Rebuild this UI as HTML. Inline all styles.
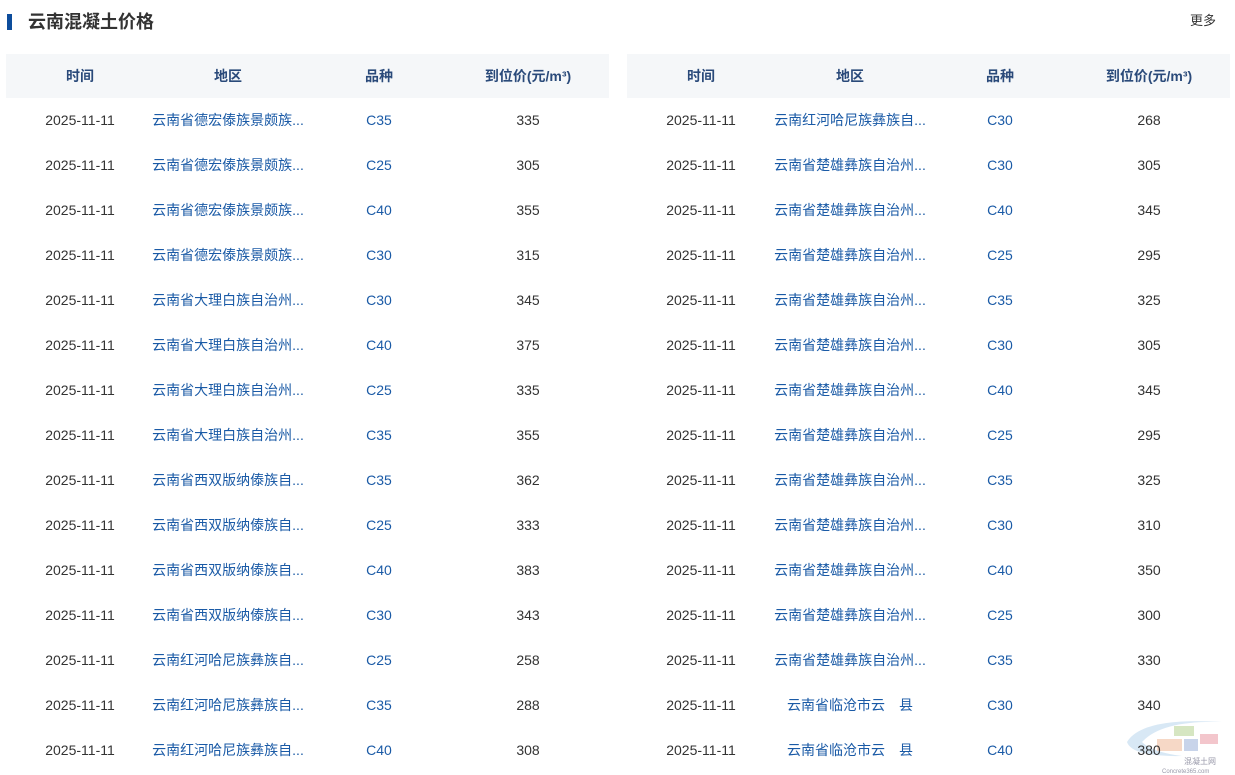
<!DOCTYPE html>
<html><head><meta charset="utf-8"><style>
*{margin:0;padding:0;box-sizing:border-box}
body{width:1235px;height:775px;background:#fff;font-family:"Liberation Sans","Noto Sans CJK SC",sans-serif;position:relative;overflow:hidden;color:#333}
.bar{position:absolute;left:7px;top:14px;width:5px;height:16px;background:#0d4d9c}
.title{position:absolute;left:28px;top:10px;font-size:18px;font-weight:bold;color:#333;line-height:24px}
.more{position:absolute;left:1190px;top:12px;font-size:13px;color:#333;line-height:18px}
.hd{position:absolute;top:54px;height:44px;width:603px;background:#f5f7f9}
.c{position:absolute;transform:translateX(-50%);white-space:nowrap;font-size:14px;line-height:20px}
.h{font-weight:bold;color:#2a4a7a;font-size:14px}
.b{color:#1a5aa6}
</style></head><body>
<div class="bar"></div><div class="title">云南混凝土价格</div><div class="more">更多</div>
<div class="hd" style="left:6px"></div><div class="hd" style="left:627px"></div>
<div id="t"></div>
<div class="c h" style="left:80px;top:66px">时间</div><div class="c h" style="left:228px;top:66px">地区</div><div class="c h" style="left:379px;top:66px">品种</div><div class="c h" style="left:528px;top:66px">到位价(元/m³)</div>
<div class="c h" style="left:701px;top:66px">时间</div><div class="c h" style="left:850px;top:66px">地区</div><div class="c h" style="left:1000px;top:66px">品种</div><div class="c h" style="left:1149px;top:66px">到位价(元/m³)</div>
<svg style="position:absolute;left:1122px;top:712px" width="113" height="63"><path d="M5 30 Q20 5 100 10 Q40 8 20 30 Q30 40 60 44 Q10 45 5 30Z" fill="#d8e8f5"/><rect x="52" y="14" width="20" height="10" fill="#d6e6c2"/><rect x="35" y="27" width="25" height="12" fill="#f6d8c6"/><rect x="62" y="27" width="14" height="12" fill="#c8d4ea"/><rect x="78" y="22" width="18" height="10" fill="#f3c6cc"/><text x="62" y="52" font-size="8" fill="#99a">混凝土网</text><text x="40" y="61" font-size="6" fill="#99a">Concrete365.com</text></svg>
<div class="c" style="left:80px;top:110px">2025-11-11</div><div class="c b" style="left:228px;top:110px">云南省德宏傣族景颇族...</div><div class="c b" style="left:379px;top:110px">C35</div><div class="c" style="left:528px;top:110px">335</div>
<div class="c" style="left:80px;top:155px">2025-11-11</div><div class="c b" style="left:228px;top:155px">云南省德宏傣族景颇族...</div><div class="c b" style="left:379px;top:155px">C25</div><div class="c" style="left:528px;top:155px">305</div>
<div class="c" style="left:80px;top:200px">2025-11-11</div><div class="c b" style="left:228px;top:200px">云南省德宏傣族景颇族...</div><div class="c b" style="left:379px;top:200px">C40</div><div class="c" style="left:528px;top:200px">355</div>
<div class="c" style="left:80px;top:245px">2025-11-11</div><div class="c b" style="left:228px;top:245px">云南省德宏傣族景颇族...</div><div class="c b" style="left:379px;top:245px">C30</div><div class="c" style="left:528px;top:245px">315</div>
<div class="c" style="left:80px;top:290px">2025-11-11</div><div class="c b" style="left:228px;top:290px">云南省大理白族自治州...</div><div class="c b" style="left:379px;top:290px">C30</div><div class="c" style="left:528px;top:290px">345</div>
<div class="c" style="left:80px;top:335px">2025-11-11</div><div class="c b" style="left:228px;top:335px">云南省大理白族自治州...</div><div class="c b" style="left:379px;top:335px">C40</div><div class="c" style="left:528px;top:335px">375</div>
<div class="c" style="left:80px;top:380px">2025-11-11</div><div class="c b" style="left:228px;top:380px">云南省大理白族自治州...</div><div class="c b" style="left:379px;top:380px">C25</div><div class="c" style="left:528px;top:380px">335</div>
<div class="c" style="left:80px;top:425px">2025-11-11</div><div class="c b" style="left:228px;top:425px">云南省大理白族自治州...</div><div class="c b" style="left:379px;top:425px">C35</div><div class="c" style="left:528px;top:425px">355</div>
<div class="c" style="left:80px;top:470px">2025-11-11</div><div class="c b" style="left:228px;top:470px">云南省西双版纳傣族自...</div><div class="c b" style="left:379px;top:470px">C35</div><div class="c" style="left:528px;top:470px">362</div>
<div class="c" style="left:80px;top:515px">2025-11-11</div><div class="c b" style="left:228px;top:515px">云南省西双版纳傣族自...</div><div class="c b" style="left:379px;top:515px">C25</div><div class="c" style="left:528px;top:515px">333</div>
<div class="c" style="left:80px;top:560px">2025-11-11</div><div class="c b" style="left:228px;top:560px">云南省西双版纳傣族自...</div><div class="c b" style="left:379px;top:560px">C40</div><div class="c" style="left:528px;top:560px">383</div>
<div class="c" style="left:80px;top:605px">2025-11-11</div><div class="c b" style="left:228px;top:605px">云南省西双版纳傣族自...</div><div class="c b" style="left:379px;top:605px">C30</div><div class="c" style="left:528px;top:605px">343</div>
<div class="c" style="left:80px;top:650px">2025-11-11</div><div class="c b" style="left:228px;top:650px">云南红河哈尼族彝族自...</div><div class="c b" style="left:379px;top:650px">C25</div><div class="c" style="left:528px;top:650px">258</div>
<div class="c" style="left:80px;top:695px">2025-11-11</div><div class="c b" style="left:228px;top:695px">云南红河哈尼族彝族自...</div><div class="c b" style="left:379px;top:695px">C35</div><div class="c" style="left:528px;top:695px">288</div>
<div class="c" style="left:80px;top:740px">2025-11-11</div><div class="c b" style="left:228px;top:740px">云南红河哈尼族彝族自...</div><div class="c b" style="left:379px;top:740px">C40</div><div class="c" style="left:528px;top:740px">308</div>
<div class="c" style="left:701px;top:110px">2025-11-11</div><div class="c b" style="left:850px;top:110px">云南红河哈尼族彝族自...</div><div class="c b" style="left:1000px;top:110px">C30</div><div class="c" style="left:1149px;top:110px">268</div>
<div class="c" style="left:701px;top:155px">2025-11-11</div><div class="c b" style="left:850px;top:155px">云南省楚雄彝族自治州...</div><div class="c b" style="left:1000px;top:155px">C30</div><div class="c" style="left:1149px;top:155px">305</div>
<div class="c" style="left:701px;top:200px">2025-11-11</div><div class="c b" style="left:850px;top:200px">云南省楚雄彝族自治州...</div><div class="c b" style="left:1000px;top:200px">C40</div><div class="c" style="left:1149px;top:200px">345</div>
<div class="c" style="left:701px;top:245px">2025-11-11</div><div class="c b" style="left:850px;top:245px">云南省楚雄彝族自治州...</div><div class="c b" style="left:1000px;top:245px">C25</div><div class="c" style="left:1149px;top:245px">295</div>
<div class="c" style="left:701px;top:290px">2025-11-11</div><div class="c b" style="left:850px;top:290px">云南省楚雄彝族自治州...</div><div class="c b" style="left:1000px;top:290px">C35</div><div class="c" style="left:1149px;top:290px">325</div>
<div class="c" style="left:701px;top:335px">2025-11-11</div><div class="c b" style="left:850px;top:335px">云南省楚雄彝族自治州...</div><div class="c b" style="left:1000px;top:335px">C30</div><div class="c" style="left:1149px;top:335px">305</div>
<div class="c" style="left:701px;top:380px">2025-11-11</div><div class="c b" style="left:850px;top:380px">云南省楚雄彝族自治州...</div><div class="c b" style="left:1000px;top:380px">C40</div><div class="c" style="left:1149px;top:380px">345</div>
<div class="c" style="left:701px;top:425px">2025-11-11</div><div class="c b" style="left:850px;top:425px">云南省楚雄彝族自治州...</div><div class="c b" style="left:1000px;top:425px">C25</div><div class="c" style="left:1149px;top:425px">295</div>
<div class="c" style="left:701px;top:470px">2025-11-11</div><div class="c b" style="left:850px;top:470px">云南省楚雄彝族自治州...</div><div class="c b" style="left:1000px;top:470px">C35</div><div class="c" style="left:1149px;top:470px">325</div>
<div class="c" style="left:701px;top:515px">2025-11-11</div><div class="c b" style="left:850px;top:515px">云南省楚雄彝族自治州...</div><div class="c b" style="left:1000px;top:515px">C30</div><div class="c" style="left:1149px;top:515px">310</div>
<div class="c" style="left:701px;top:560px">2025-11-11</div><div class="c b" style="left:850px;top:560px">云南省楚雄彝族自治州...</div><div class="c b" style="left:1000px;top:560px">C40</div><div class="c" style="left:1149px;top:560px">350</div>
<div class="c" style="left:701px;top:605px">2025-11-11</div><div class="c b" style="left:850px;top:605px">云南省楚雄彝族自治州...</div><div class="c b" style="left:1000px;top:605px">C25</div><div class="c" style="left:1149px;top:605px">300</div>
<div class="c" style="left:701px;top:650px">2025-11-11</div><div class="c b" style="left:850px;top:650px">云南省楚雄彝族自治州...</div><div class="c b" style="left:1000px;top:650px">C35</div><div class="c" style="left:1149px;top:650px">330</div>
<div class="c" style="left:701px;top:695px">2025-11-11</div><div class="c b" style="left:850px;top:695px">云南省临沧市云　县</div><div class="c b" style="left:1000px;top:695px">C30</div><div class="c" style="left:1149px;top:695px">340</div>
<div class="c" style="left:701px;top:740px">2025-11-11</div><div class="c b" style="left:850px;top:740px">云南省临沧市云　县</div><div class="c b" style="left:1000px;top:740px">C40</div><div class="c" style="left:1149px;top:740px">380</div>
</body></html>
